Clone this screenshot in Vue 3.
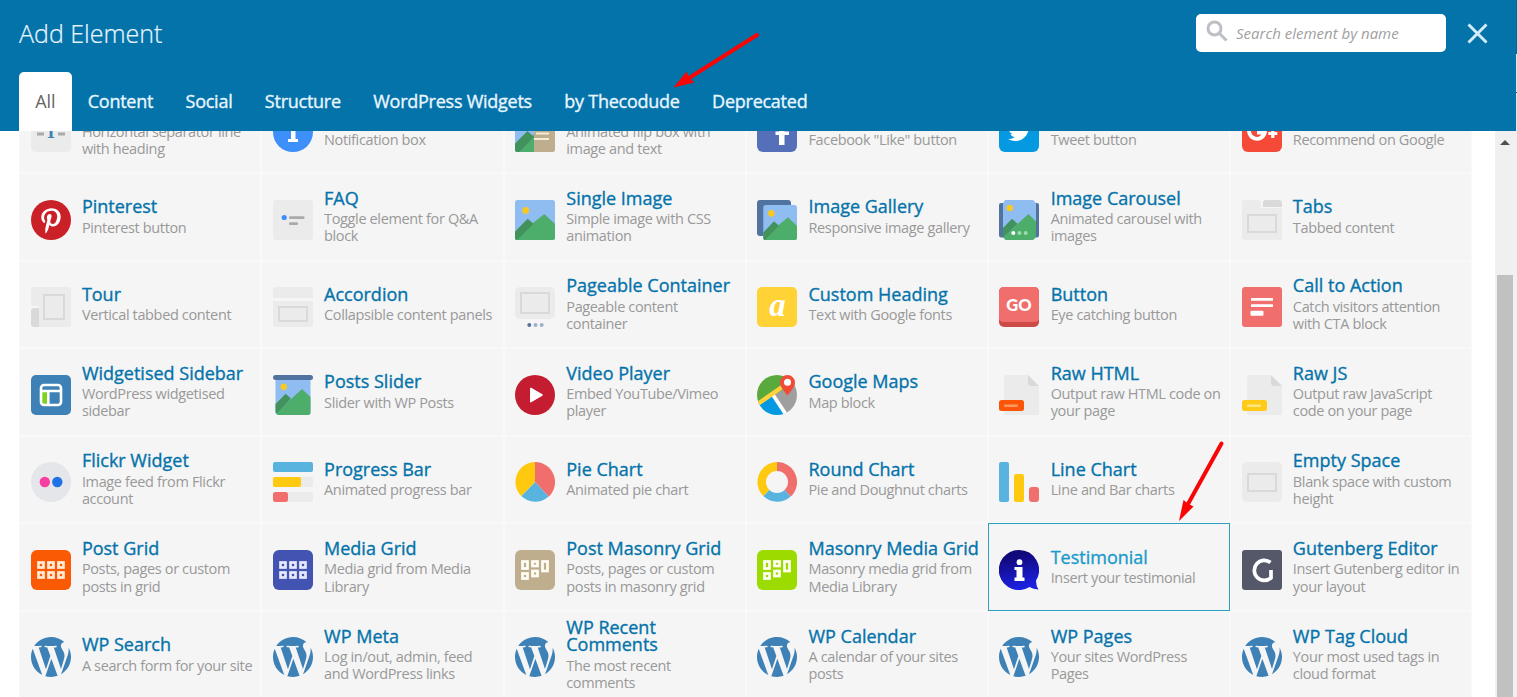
<script setup>
const tabs = ['All', 'Content', 'Social', 'Structure', 'WordPress Widgets', 'by Thecodude', 'Deprecated']

const hills = '<path fill="#4dae6b" d="M0 37.5 29.300 14 40 24V37.500Q40 40 37.500 40H2.500Q0 40 0 37.500Z"/><path fill="#42925d" d="M0 31.500 12.700 18.700 18.500 23.700 2 40Q0 40 0 37.500Z"/>'
const scene = '<rect width="40" height="40" rx="2.500" fill="#90bdf1"/><circle cx="10.700" cy="10.500" r="3.400" fill="#fac823"/>' + hills
const wordpress = '<path fill="#3e81b6" transform="scale(1.8544) translate(-1.215 -1.215)" d="M21.469 6.825c.84 1.537 1.318 3.3 1.318 5.175 0 3.979-2.156 7.456-5.363 9.325l3.295-9.527c.615-1.54.82-2.771.82-3.864 0-.405-.026-.78-.07-1.11m-7.981.105c.647-.03 1.232-.105 1.232-.105.582-.075.514-.93-.067-.899 0 0-1.755.135-2.88.135-1.064 0-2.85-.15-2.85-.15-.585-.03-.661.855-.075.885 0 0 .54.061 1.125.09l1.68 4.605-2.37 7.08L5.354 6.9c.649-.03 1.234-.1 1.234-.1.585-.075.516-.93-.065-.896 0 0-1.746.138-2.874.138-.2 0-.438-.008-.69-.015C4.911 3.15 8.235 1.215 12 1.215c2.809 0 5.365 1.072 7.286 2.833-.046-.003-.091-.009-.141-.009-1.06 0-1.812.923-1.812 1.914 0 .89.513 1.643 1.06 2.531.411.72.89 1.643.89 2.977 0 .915-.354 1.994-.821 3.479l-1.075 3.585-3.9-11.61.001.014zM12 22.784c-1.059 0-2.081-.153-3.048-.437l3.237-9.406 3.315 9.087c.024.053.05.101.078.149-1.12.393-2.325.609-3.582.609M1.211 12c0-1.564.336-3.05.935-4.39L7.29 21.709C3.694 19.96 1.212 16.271 1.211 12"/>'
const cells = (list) => list.map(([x, y, h]) => `<rect x="${x}" y="${y}" width="5" height="${h - 3}"/>`).join('')
const gridIcon = (bg, stroke) => `<rect width="40" height="40" rx="6" fill="${bg}"/><g fill="none" stroke="${stroke}" stroke-width="2.700">${cells([[7.5, 12.5, 8], [17.5, 12.5, 8], [27.5, 12.5, 8], [7.5, 22.5, 8], [17.5, 22.5, 8], [27.5, 22.5, 8]])}</g>`
const masonryIcon = (bg) => `<rect width="40" height="40" rx="6" fill="${bg}"/><g fill="none" stroke="#fffef4" stroke-width="2.700">${cells([[7.5, 11.5, 10], [17.5, 11.5, 7.5], [27.5, 11.5, 12.5], [7.5, 23.5, 8], [17.5, 21, 8]])}</g>`
const sheet = (badge, line) => `<path fill="#ebebeb" d="M8 0H29L40 11V40H8Q5 40 5 37V3Q5 0 8 0Z"/><path fill="#d9d9d9" d="M29 0 40 11H32Q29 11 29 8Z"/><rect y="25" width="25" height="11" rx="2.500" fill="${badge}"/><rect x="5.200" y="29.500" width="13.500" height="2.500" fill="${line}"/>`

const icons = {
  separator: '<rect width="40" height="40" rx="5" fill="#ebebeb"/><path fill="#aaa" d="M6 20.500h7v3H6zM27 20.500h7v3h-7z"/><text x="20" y="26" text-anchor="middle" font-family="Liberation Serif, serif" font-weight="700" font-size="18" fill="#3e81b6">T</text>',
  message: '<circle cx="20" cy="20" r="20" fill="#3d90fa"/><path fill="#fff" d="M16 14h6.500v13H25v3H15v-3h3V17h-2z"/>',
  flip: '<rect width="40" height="40" rx="2.500" fill="#bfae8e"/><path fill="#90bdf1" d="M3 0H19V40H3Q0 40 0 37V3Q0 0 3 0Z"/><path fill="#4dae6b" d="M2 40 19 22V40Z"/><path fill="#42925d" d="M0 31.500 12.500 19 19 25 4 40H2Q0 40 0 38Z"/><path stroke="#f4ecd9" stroke-width="1.800" d="M21 21.500H34M19 27H34"/>',
  facebook: '<rect width="40" height="40" rx="6" fill="#5570b8"/><path fill="#fff" d="M22 33V23h-3.500v-3.500H22V16q0-5 5-5h5v4h-3q-1.500 0-1.500 2v2.500H32V23h-4.500v10z"/>',
  twitter: '<rect width="40" height="40" rx="6" fill="#0499e0"/><path fill="#fff" transform="translate(9 8.200) scale(.96)" d="M23.953 4.57a10 10 0 01-2.825.775 4.958 4.958 0 002.163-2.723c-.951.555-2.005.959-3.127 1.184a4.92 4.92 0 00-8.384 4.482C7.69 8.095 4.067 6.13 1.64 3.162a4.822 4.822 0 00-.666 2.475c0 1.71.87 3.213 2.188 4.096a4.904 4.904 0 01-2.228-.616v.06a4.923 4.923 0 003.946 4.827 4.996 4.996 0 01-2.212.085 4.936 4.936 0 004.604 3.417 9.867 9.867 0 01-6.102 2.105c-.39 0-.779-.023-1.17-.067a13.995 13.995 0 007.557 2.209c9.053 0 13.998-7.496 13.998-13.985 0-.21 0-.42-.015-.63A9.935 9.935 0 0024 4.59z"/>',
  google: '<rect width="40" height="40" rx="6" fill="#f44a37"/><g fill="none" stroke="#fff" stroke-width="3.800"><path d="M21 13.500A8 8 0 1 0 22.800 20.500H15"/><path stroke-width="3.200" d="M30.800 17v9M26.300 21.500h9"/></g>',
  pinterest: '<circle cx="20" cy="20" r="20" fill="#ca2027"/><path fill="#fff" transform="translate(10.300 8) scale(.0505)" d="M204 6.500C101.400 6.500 0 74.900 0 185.600 0 256 39.600 296 63.600 296c9.900 0 15.600-27.600 15.600-35.400 0-9.300-23.700-29.100-23.700-67.800 0-80.400 61.200-137.400 140.400-137.400 68.100 0 118.500 38.700 118.500 109.800 0 53.100-21.300 152.700-90.300 152.700-24.900 0-46.200-18-46.200-43.800 0-37.800 26.400-74.400 26.400-113.400 0-66.200-93.900-54.200-93.900 25.800 0 16.800 2.100 35.400 9.600 50.700-13.800 59.400-42 147.900-42 209.100 0 18.900 2.700 37.500 4.500 56.400 3.400 3.800 1.700 3.400 6.900 1.400 50.400-69 48.600-82.500 71.400-172.800 12.300 23.400 44.100 36 69.300 36 106.200 0 153.900-103.500 153.900-196.800C384 71.300 298.200 6.500 204 6.500z"/>',
  faq: '<rect width="40" height="40" rx="3" fill="#ebebeb"/><circle cx="11.200" cy="17.500" r="2.600" fill="#3d90fa"/><rect x="16" y="16.200" width="15.500" height="2.800" rx="1" fill="#aaa"/><rect x="16" y="22.300" width="9" height="2.700" rx="1" fill="#aaa"/>',
  image: scene,
  gallery: '<rect width="34" height="36" rx="3" fill="#50749f"/><g transform="translate(6.300 5) scale(.8425 .875)"><rect width="40" height="40" rx="3" fill="#90bdf1"/><circle cx="9.500" cy="9.500" r="3.900" fill="#fac823"/>' + hills + '</g>',
  carousel: '<path fill="#50749f" d="M0 5Q0 3 2 3H38Q40 3 40 5V35Q40 37.500 38 37.500H2Q0 37.500 0 35Z"/><path fill="#90bdf1" d="M6 0H34L37 3V37L34 40H6L4 37V3Z"/><circle cx="10.800" cy="8" r="3.300" fill="#fac823"/><path fill="#4dae6b" d="M4 37 29.500 14 37 21.500V37L34 40H7Z"/><path fill="#42925d" d="M4 28 13 18.700 18.500 23.700 4 37.500Z"/><circle cx="14.300" cy="33" r="2" fill="#fff"/><circle cx="20.500" cy="33" r="2" fill="#9bdcae"/><circle cx="26.700" cy="33" r="2" fill="#9bdcae"/>',
  tabs: '<path fill="#ebebeb" d="M2.500 0H16.500Q18.500 0 18.500 2V8H40V37.500Q40 40 37.500 40H2.500Q0 40 0 37.500V2.500Q0 0 2.500 0Z"/><path fill="#d9d9d9" d="M24 0H37Q40 0 40 3V7H21V3Q21 0 24 0Z"/><rect x="6" y="15" width="28" height="17" fill="none" stroke="#d9d9d9" stroke-width="2"/>',
  tour: '<path fill="#ebebeb" d="M2.500 0H37.500Q40 0 40 2.500V37.500Q40 40 37.500 40H8V19H2Q0 19 0 16.500V2.500Q0 0 2.500 0Z"/><path fill="#d9d9d9" d="M3 21H8V40H3Q0 40 0 37V24Q0 21 3 21Z"/><rect x="13" y="8" width="20" height="24" fill="none" stroke="#d9d9d9" stroke-width="2"/>',
  accordion: '<path fill="#ebebeb" d="M3 0H37Q40 0 40 3V11H0V3Q0 0 3 0ZM0 14H40V37Q40 40 37 40H3Q0 40 0 37Z"/><rect x="6" y="20" width="28" height="14" fill="none" stroke="#d9d9d9" stroke-width="2"/>',
  pageable: '<rect width="40" height="32" rx="5" fill="#ebebeb"/><rect x="6" y="6" width="28" height="20" fill="none" stroke="#d9d9d9" stroke-width="2"/><circle cx="14.300" cy="38" r="2" fill="#50749f"/><circle cx="20.500" cy="38" r="2" fill="#9db0c7"/><circle cx="26.700" cy="38" r="2" fill="#9db0c7"/>',
  heading: '<rect width="40" height="40" rx="5" fill="#ffd236"/><text x="20.500" y="28.700" text-anchor="middle" font-family="Liberation Serif, serif" font-style="italic" font-weight="700" font-size="33" fill="#fff">a</text>',
  button: '<rect width="40" height="40" rx="5" fill="#cc4b46"/><path fill="#f06f6c" d="M5 0H35Q40 0 40 5V31Q40 35 35 35H5Q0 35 0 31V5Q0 0 5 0Z"/><text x="20" y="23.800" text-anchor="middle" font-family="Lato, sans-serif" font-weight="900" font-size="16.500" fill="#fff">GO</text>',
  cta: '<rect width="40" height="40" rx="3" fill="#f06f6c"/><path fill="#fff" d="M9 11H31V13.700H9ZM9 17.300H31V20H9Z"/><rect x="8.500" y="23.700" width="13" height="5" rx="1" fill="#fff"/>',
  sidebar: '<rect width="40" height="40" rx="5" fill="#3e81b6"/><path fill="#7ed321" d="M11 17H16V29H13Q11 29 11 27Z"/><rect x="10" y="10" width="20" height="20" rx="3" fill="none" stroke="#fff" stroke-width="2.600"/><path fill="none" stroke="#fff" stroke-width="2.600" d="M10 16H30M17.300 16V30"/>',
  slider: '<path fill="#90bdf1" d="M2.500 4H37.500V37Q37.500 40 35 40H5Q2.500 40 2.500 37Z"/><circle cx="10.700" cy="11.700" r="3.200" fill="#fac823"/><path fill="#4dae6b" d="M3 38 29 14 37.500 22V37Q37.500 40 35 40H5Z"/><path fill="#42925d" d="M2.500 29 12.700 18.700 18 23.500 3.500 38.500 2.500 37Z"/><rect width="40" height="5" rx="2.500" fill="#50749f"/>',
  video: '<circle cx="20" cy="20" r="20" fill="#c41c30"/><path fill="#fff" stroke="#fff" stroke-width="1.500" stroke-linejoin="round" d="M15.800 13.500V26.700L27 20Z"/>',
  maps: '<clipPath id="map-disc"><circle cx="20" cy="20" r="20"/></clipPath><g clip-path="url(#map-disc)"><path fill="#5aa93c" d="M0 0H40V10L0 30Z"/><path fill="#9f9f9f" d="M17 20 40 7V40H28Z"/><path fill="#0499e0" d="M0 31 15 20 28 40H0Z"/><path stroke="#fff" stroke-width="3.800" d="M16 20 29 39.500"/><path stroke="#ffd23e" stroke-width="4.500" d="M0 29.500 28 10"/></g><path fill="#f04b37" d="M30.500 0A7.500 7.500 0 0 1 38 7.500C38 12 33.500 16.500 30.500 20.500C27.500 16.500 23 12 23 7.500A7.500 7.500 0 0 1 30.500 0Z"/><circle cx="30.500" cy="7.300" r="3.500" fill="#fff"/>',
  html: sheet('#fb5607', '#ff9765'),
  js: sheet('#ffcb17', '#ffe680'),
  flickr: '<circle cx="20" cy="20" r="20" fill="#e4e6e9"/><circle cx="13.800" cy="20" r="5.200" fill="#f83fa1"/><circle cx="26.300" cy="20" r="5.200" fill="#2172e4"/>',
  progress: '<rect width="40" height="10" rx="2" fill="#58b4df"/><rect y="15" width="40" height="10" rx="2" fill="#ebebeb"/><rect y="15" width="28" height="10" rx="2" fill="#ffc90f"/><rect y="30" width="40" height="10" rx="2" fill="#ebebeb"/><rect y="30" width="15" height="10" rx="2.500" fill="#f06f6c"/>',
  pie: '<path fill="#f06f6c" d="M20 20V0A20 20 0 0 1 33.700 34.600Z"/><path fill="#58b4df" d="M20 20 33.700 34.600A20 20 0 0 1 6.300 34.100Z"/><path fill="#ffc90f" d="M20 20 6.300 34.100A20 20 0 0 1 20 0Z"/>',
  round: '<path fill="#f06f6c" d="M20 20V0A20 20 0 0 1 33.700 34.600Z"/><path fill="#58b4df" d="M20 20 33.700 34.600A20 20 0 0 1 6.300 34.100Z"/><path fill="#ffc90f" d="M20 20 6.300 34.100A20 20 0 0 1 20 0Z"/><circle cx="20" cy="20" r="11" fill="#f5f5f5"/>',
  line: '<rect width="10" height="40" rx="2" fill="#58b4df"/><rect x="15" y="12" width="10" height="28" rx="2" fill="#ffc90f"/><rect x="30" y="25" width="10" height="15" rx="3" fill="#f06f6c"/>',
  empty: '<rect width="40" height="40" rx="5" fill="#ebebeb"/><rect x="6" y="12" width="28" height="17" fill="none" stroke="#d9d9d9" stroke-width="2"/>',
  postGrid: gridIcon('#fb5a04', '#ffead6'),
  mediaGrid: gridIcon('#4353b1', '#e6e8fb'),
  postMasonry: masonryIcon('#bfae8e'),
  mediaMasonry: masonryIcon('#9cdb00'),
  testimonial: '<linearGradient id="bubble" x2="0.200" y2="1"><stop offset=".2" stop-color="#110879"/><stop offset="1" stop-color="#1c20df"/></linearGradient><path fill="url(#bubble)" d="M20 0A20 20 0 0 1 37 30.500Q37 36 39.500 39.500Q34 39 30.500 36.900A20 20 0 1 1 20 0Z"/><circle cx="20.500" cy="12.200" r="2.900" fill="#fff"/><path fill="#fff" d="M15.500 17H23.500V27.500H25.500V31H15.500V27.500H17.500V20H15.500Z"/>',
  gutenberg: '<rect width="40" height="40" rx="3" fill="#555869"/><path fill="none" stroke="#fff" stroke-width="3.700" d="M28.500 12.500A10 10 0 1 0 29 27.800V20"/>',
  wordpress
}

const elements = [
  ['separator', '', 'Horizontal separator line with heading'],
  ['message', '', 'Notification box'],
  ['flip', '', 'Animated flip box with image and text'],
  ['facebook', '', 'Facebook "Like" button'],
  ['twitter', '', 'Tweet button'],
  ['google', '', 'Recommend on Google'],
  ['pinterest', 'Pinterest', 'Pinterest button'],
  ['faq', 'FAQ', 'Toggle element for Q&A block'],
  ['image', 'Single Image', 'Simple image with CSS animation'],
  ['gallery', 'Image Gallery', 'Responsive image gallery'],
  ['carousel', 'Image Carousel', 'Animated carousel with images'],
  ['tabs', 'Tabs', 'Tabbed content'],
  ['tour', 'Tour', 'Vertical tabbed content'],
  ['accordion', 'Accordion', 'Collapsible content panels'],
  ['pageable', 'Pageable Container', 'Pageable content container'],
  ['heading', 'Custom Heading', 'Text with Google fonts'],
  ['button', 'Button', 'Eye catching button'],
  ['cta', 'Call to Action', 'Catch visitors attention with CTA block'],
  ['sidebar', 'Widgetised Sidebar', 'WordPress widgetised sidebar'],
  ['slider', 'Posts Slider', 'Slider with WP Posts'],
  ['video', 'Video Player', 'Embed YouTube/Vimeo player'],
  ['maps', 'Google Maps', 'Map block'],
  ['html', 'Raw HTML', 'Output raw HTML code on your page'],
  ['js', 'Raw JS', 'Output raw JavaScript code on your page'],
  ['flickr', 'Flickr Widget', 'Image feed from Flickr account'],
  ['progress', 'Progress Bar', 'Animated progress bar'],
  ['pie', 'Pie Chart', 'Animated pie chart'],
  ['round', 'Round Chart', 'Pie and Doughnut charts'],
  ['line', 'Line Chart', 'Line and Bar charts'],
  ['empty', 'Empty Space', 'Blank space with custom height'],
  ['postGrid', 'Post Grid', 'Posts, pages or custom posts in grid'],
  ['mediaGrid', 'Media Grid', 'Media grid from Media Library'],
  ['postMasonry', 'Post Masonry Grid', 'Posts, pages or custom posts in masonry grid'],
  ['mediaMasonry', 'Masonry Media Grid', 'Masonry media grid from Media Library'],
  ['testimonial', 'Testimonial', 'Insert your testimonial'],
  ['gutenberg', 'Gutenberg Editor', 'Insert Gutenberg editor in your layout'],
  ['wordpress', 'WP Search', 'A search form for your site'],
  ['wordpress', 'WP Meta', 'Log in/out, admin, feed and WordPress links'],
  ['wordpress', 'WP Recent Comments', 'The most recent comments'],
  ['wordpress', 'WP Calendar', 'A calendar of your sites posts'],
  ['wordpress', 'WP Pages', 'Your sites WordPress Pages'],
  ['wordpress', 'WP Tag Cloud', 'Your most used tags in cloud format']
].map(([icon, title, text]) => ({ icon, title, text }))
</script>

<template>
  <div class="panel">
    <header class="head">
      <div class="bar">
        <h1>Add Element</h1>
        <label class="search">
          <svg width="22" height="22" viewBox="0 0 22 22"><circle cx="8.500" cy="8.500" r="6.500" /><path d="M13 13 20.500 20.500" /></svg>
          <span>Search element by name</span>
        </label>
        <svg class="close" width="22" height="22" viewBox="0 0 22 22"><path d="M2.500 2.500 20.500 20.500M20.500 2.500 2.500 20.500" /></svg>
      </div>
      <nav>
        <a v-for="(t, i) in tabs" :key="t" :class="{ active: i === 0 }">{{ t }}</a>
      </nav>
    </header>
    <div class="body">
      <ul class="list">
        <li v-for="(e, i) in elements" :key="i" :class="{ chosen: e.icon === 'testimonial' }">
          <svg class="icon" width="40" height="40" viewBox="0 0 40 40" v-html="icons[e.icon]"></svg>
          <div class="label">
            <strong>{{ e.title }}</strong>
            <span>{{ e.text }}</span>
          </div>
        </li>
      </ul>
      <div class="scroll">
        <svg width="10" height="5" viewBox="0 0 10 5"><path fill="#505050" d="M0 5 5 0 10 5Z" /></svg>
        <i></i>
      </div>
    </div>
    <svg class="arrows" width="1517" height="697" viewBox="0 0 1517 697">
      <g fill="#f90505" stroke="#f90505" stroke-linecap="round">
        <path stroke-width="4" d="M757 35 689 78" /><path stroke="none" d="M673.500 87.500 686.500 71.500 689 77.500 694.500 82.500Z" />
        <path stroke-width="4" d="M1221.500 443.500 1188 504" /><path stroke="none" d="M1179 521 1183.500 500 1188 503.500 1193.500 506.500Z" />
      </g>
    </svg>
  </div>
</template>

<style>
html, body { margin: 0; overflow: hidden; }
</style>

<style scoped>
.panel { position: relative; width: 1517px; height: 697px; overflow: hidden; display: flex; flex-direction: column; background: #fff; font-family: "Open Sans", "Noto Sans", sans-serif; }
.head { flex: none; height: 131px; background: linear-gradient(#04639a 54px, #dfe6ec 54px, #dfe6ec 92px, #2a5d85 92px, #2a5d85 93px, #dfe6ec 93px) right / 1px 100% no-repeat #0473aa; display: flex; flex-direction: column; justify-content: space-between; position: relative; z-index: 1; }
.bar { display: flex; align-items: flex-start; padding: 14px 29px 0 19px; }
h1 { margin: 0; flex: 1; font-size: 25px; line-height: 39px; font-weight: 300; color: #e9f6ff; -webkit-text-stroke: .2px; }
.search { display: flex; align-items: center; width: 250px; height: 38px; box-sizing: border-box; padding-left: 10px; gap: 8px; background: #fff; border-radius: 5px; margin-right: 20px; }
.search svg { margin-top: -4px; fill: none; stroke: #bcbfc4; stroke-width: 3; }
.search span { font-size: 15px; font-style: italic; color: #a0a0a0; }
.close { margin-top: 8px; stroke: #d5ecfa; stroke-width: 3; }
nav { display: flex; padding-left: 19px; }
nav a { height: 59px; line-height: 59px; padding: 0 16.200px; font-size: 18px; letter-spacing: -.25px; font-weight: 500; color: #e9f6ff; white-space: nowrap; -webkit-text-stroke: .35px; }
nav a.active { background: #fff; color: #666; font-weight: 400; border-radius: 5px 5px 0 0; -webkit-text-stroke: 0; letter-spacing: -.100px; }
.body { flex: 1; min-height: 0; display: flex; justify-content: space-between; overflow: hidden; }
.list { list-style: none; width: 1453.2px; margin: -45.500px 0 0 19.200px; padding: 0; flex: none; display: grid; grid-template-columns: repeat(6, 1fr); grid-auto-rows: 87.550px; align-content: start; }
li { box-sizing: border-box; display: flex; align-items: center; border: 1px solid #faf8f8; background: #f5f5f5; padding: 0 4px 0 10.350px; }
li.chosen { border-color: #2b9fc0; }
.icon { flex: none; margin: 5.600px 11.350px 0 0; }
.label { flex: 1; min-width: 0; padding-top: .600px; }
strong { display: block; min-height: 17.500px; font-size: 18px; line-height: 17.500px; font-weight: 500; color: #0473aa; padding-bottom: 3px; -webkit-text-stroke: .35px; }
.chosen strong { color: #1a9bcb; }
.label span { display: block; font-size: 14.500px; letter-spacing: -.36px; line-height: 17.100px; padding-right: 3.500px; color: #999; }
.scroll { width: 22px; flex: none; background: #f0f0f0; display: flex; flex-direction: column; align-items: center; padding-top: 9px; box-sizing: border-box; }
.scroll svg { flex: none; margin-right: 2px; }
.scroll i { flex: 1; width: 16px; margin: 130px 2px 0 0; background: #c1c1c1; }
.arrows { position: absolute; inset: 0; z-index: 2; pointer-events: none; }
</style>
